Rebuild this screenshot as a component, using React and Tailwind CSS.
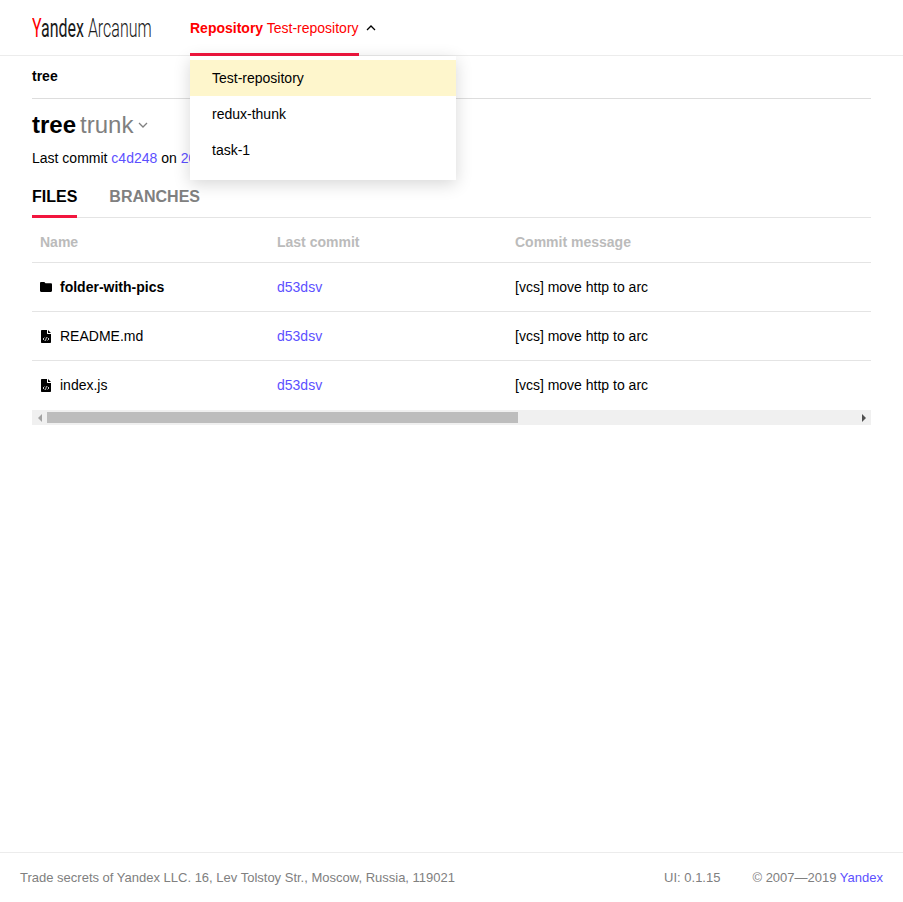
import React from "react";

const rows = [
  { name: "folder-with-pics", folder: true },
  { name: "README.md" },
  { name: "index.js", last: true },
];

const FolderIcon = () => (
  <svg width="12" height="10" viewBox="0 0 12 10" className="shrink-0">
    <path d="M0 1.2C0 .5.5 0 1.2 0h3.1l1.2 1.2h5.3c.7 0 1.2.5 1.2 1.2v6.4c0 .7-.5 1.2-1.2 1.2H1.2C.5 10 0 9.500 0 8.800z" fill="#000" />
  </svg>
);

const FileIcon = () => (
  <svg width="10" height="13" viewBox="0 0 10 13" className="ml-[1px] mr-[1px] shrink-0">
    <path d="M1 0h5L6 3.500c0 .3.200.5.500.5H10v8c0 .6-.4 1-1 1H1c-.6 0-1-.4-1-1V1c0-.6.4-1 1-1zM7 0l3 3H7z" fill="#000" />
    <path d="M3.400 7.600 2 9l1.400 1.400M6.600 7.600 8 9 6.600 10.400M5.500 7.200 4.500 10.800" stroke="#fff" strokeWidth=".8" fill="none" />
  </svg>
);

const Chevron = ({ up, className }) => (
  <svg width="10" height="6" viewBox="0 0 10 6" className={className}>
    <path d={up ? "M1 5l4-4 4 4" : "M1 1l4 4 4-4"} fill="none" stroke="currentColor" strokeWidth="1.300" />
  </svg>
);

const Logo = () => (
  <div className="w-[158px] shrink-0 h-[55px] flex items-center">
    <div className="origin-left scale-x-[.614] whitespace-nowrap text-[26px] leading-none text-[#1a1a1a] font-['Roboto',sans-serif]">
      <span className="text-[#f00]">Y</span>
      <span>andex</span>{" "}
      <span className="font-light">Arcanum</span>
    </div>
  </div>
);

const Dropdown = () => (
  <div className="absolute left-0 top-[56px] w-[266px] bg-white pt-1 pb-3 z-10 shadow-[0_4px_16px_rgba(0,0,0,0.16)]">
    <div className="h-9 pl-[22px] flex items-center bg-[#fef6cc]">Test-repository</div>
    <div className="h-9 pl-[22px] flex items-center">redux-thunk</div>
    <div className="h-9 pl-[22px] flex items-center">task-1</div>
  </div>
);

export default function App() {
  return (
    <div className="min-h-[902px] flex flex-col bg-white text-black text-[14px] font-['Liberation_Sans',Arial,sans-serif]">
      <header className="h-[56px] px-8 flex border-b border-[#ececec]">
        <Logo />
        <div className="relative">
          <div className="h-[56px] flex items-start">
            <div className="h-[56px] pt-[19px] leading-[18px] text-[#f00] border-b-[3px] border-[#f2163e] whitespace-nowrap">
              <span className="font-bold">Repository</span> Test-repository
            </div>
            <Chevron up className="ml-[7px] mt-[25px] text-black" />
          </div>
          <Dropdown />
        </div>
      </header>

      <main className="flex-1 px-8">
        <div className="h-[43px] pb-[2px] flex items-center font-bold border-b border-[#dddddd]">tree</div>

        <div className="mt-[12px] h-[28px] flex items-center text-[24px] leading-[28px]">
          <span className="font-bold">tree</span>
          <span className="ml-[4px] text-[#808080]">trunk</span>
          <Chevron className="ml-[5px] text-[#808080]" />
        </div>

        <div className="mt-[10px] leading-[18px]">
          Last commit <span className="text-[#5c50ff]">c4d248</span> on{" "}
          <span className="text-[#5c50ff]">20 Oct 2019</span>
        </div>

        <div className="mt-[18px] h-[33px] flex gap-8 border-b border-[#e4e4e4] text-[16px] font-bold leading-[20px]">
          <div className="h-[33px] pt-[2px] border-b-[3px] border-[#f2163e]">FILES</div>
          <div className="pt-[2px] text-[#808080]">BRANCHES</div>
        </div>

        <div className="h-[45px] pt-[5px] grid grid-cols-[237px_238px_1fr] items-center pl-2 font-bold text-[#bbbbbb] border-b border-[#e4e4e4]">
          <div>Name</div>
          <div>Last commit</div>
          <div>Commit message</div>
        </div>

        {rows.map((row) => (
          <div
            key={row.name}
            className={`h-[49px] grid grid-cols-[237px_238px_1fr] items-center pl-2 ${row.last ? "" : "border-b border-[#e4e4e4]"}`}
          >
            <div className={`flex items-center gap-2 ${row.folder ? "font-bold" : ""}`}>
              {row.folder ? <FolderIcon /> : <FileIcon />}
              {row.name}
            </div>
            <div className="text-[#5c50ff]">d53dsv</div>
            <div>[vcs] move http to arc</div>
          </div>
        ))}

        {/* scrollbar */}
        <div className="h-[15px] flex items-center bg-[#f0f0f0]">
          <div className="w-[15px] flex justify-center">
            <div className="w-0 h-0 border-y-[4px] border-y-transparent border-r-[4px] border-r-[#a3a3a3]" />
          </div>
          <div className="w-[471px] h-[11px] bg-[#bdbdbd]" />
          <div className="ml-auto w-[15px] flex justify-center">
            <div className="w-0 h-0 border-y-[4px] border-y-transparent border-l-[4px] border-l-[#505050]" />
          </div>
        </div>
      </main>

      <footer className="h-[50px] px-5 flex items-center text-[13px] text-[#808080] border-t border-[#ececec]">
        <div>Trade secrets of Yandex LLC. 16, Lev Tolstoy Str., Moscow, Russia, 119021</div>
        <div className="ml-auto">UI: 0.1.15</div>
        <div className="ml-[32px]">
          © 2007—2019 <span className="text-[#5c50ff]">Yandex</span>
        </div>
      </footer>
    </div>
  );
}
